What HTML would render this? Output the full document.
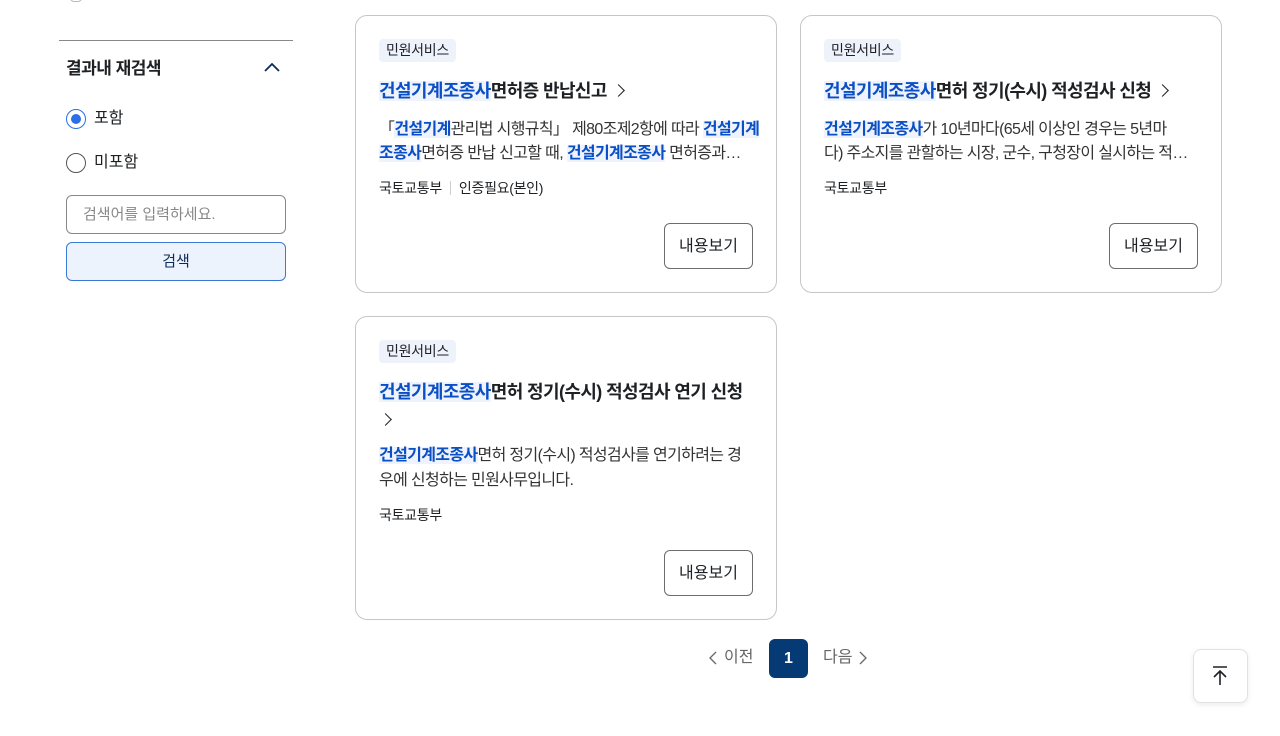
<!DOCTYPE html>
<html lang="ko"><head><meta charset="utf-8"><style>
*{margin:0;padding:0;box-sizing:border-box}
body{width:1280px;height:736px;background:#fff;position:relative;overflow:hidden;font-family:"Liberation Sans","Noto Sans CJK KR",sans-serif;color:#1e2124}
.a{position:absolute}
.card{position:absolute;border:1px solid #c6c6c6;border-radius:12px;background:#fff}
.tag{position:absolute;left:23px;top:23px;height:23px;padding:0 7px;background:#eef2fb;border-radius:4px;font-size:14px;line-height:23px;color:#1e2124;letter-spacing:-0.3px}
.title{position:absolute;left:23px;font-size:18px;font-weight:700;line-height:28px;white-space:nowrap;color:#1e2124;letter-spacing:-0.6px}
.hl{color:#0b4fc5;background:#eef3fd;font-weight:700}
.desc{position:absolute;left:23px;font-size:16px;line-height:24px;color:#333;white-space:nowrap;letter-spacing:-0.65px}
.meta{position:absolute;left:23px;font-size:14px;line-height:20px;color:#1e2124;white-space:nowrap;letter-spacing:-0.3px}
.sep{display:inline-block;width:1px;height:14px;background:#ccc;margin:0 8px;vertical-align:-2px}
.btn{position:absolute;left:308px;width:89px;height:46px;border:1px solid #6d6d6d;border-radius:6px;font-size:16px;line-height:46px;text-align:center;color:#1e2124}
.chev{display:inline-block;width:9px;height:9px;border-top:1.7px solid #1e2124;border-right:1.7px solid #1e2124;transform:rotate(45deg);margin-left:7px;vertical-align:2px}
</style></head><body>

<div class="a" style="left:70px;top:-6px;width:12px;height:8px;border-radius:6px;border:1px solid #bbb"></div>
<div class="a" style="left:59px;top:40px;width:234px;height:1px;background:#888"></div>
<div class="a" style="left:66px;top:57px;font-size:17px;font-weight:700;line-height:24px;color:#1e2124;letter-spacing:-0.5px">결과내 재검색</div>
<svg class="a" style="left:262px;top:60px" width="20" height="14"><path d="M3 11 L10 4 L17 11" fill="none" stroke="#0b2a5c" stroke-width="1.8"/></svg>

<div class="a" style="left:66px;top:109px;width:20px;height:20px;border-radius:50%;border:1.5px solid #2a6fe8"></div>
<div class="a" style="left:71px;top:114px;width:10px;height:10px;border-radius:50%;background:#2a6fe8"></div>
<div class="a" style="left:94px;top:108px;font-size:16px;line-height:22px">포함</div>
<div class="a" style="left:66px;top:153px;width:20px;height:20px;border-radius:50%;border:1.5px solid #555"></div>
<div class="a" style="left:94px;top:152px;font-size:16px;line-height:22px">미포함</div>

<div class="a" style="left:66px;top:195px;width:220px;height:39px;border:1px solid #888;border-radius:6px;font-size:15px;line-height:37px;padding-left:16px;color:#888">검색어를 입력하세요.</div>
<div class="a" style="left:66px;top:242px;width:220px;height:39px;border:1px solid #3a78d8;border-radius:6px;background:#edf3fd;font-size:15px;line-height:37px;text-align:center;color:#0b2a5c">검색</div>

<!-- card 1 -->
<div class="card" style="left:355px;top:15px;width:422px;height:278px">
  <div class="tag">민원서비스</div>
  <div class="title" style="top:61px"><span class="hl">건설기계조종사</span>면허증 반납신고<span class="chev"></span></div>
  <div class="desc" style="top:102px">「<span class="hl">건설기계</span>관리법 시행규칙」 제80조제2항에 따라 <span class="hl">건설기계</span></div>
  <div class="desc" style="top:126px"><span class="hl">조종사</span>면허증 반납 신고할 때, <span class="hl">건설기계조종사</span> 면허증과…</div>
  <div class="meta" style="top:162px">국토교통부<span class="sep"></span>인증필요(본인)</div>
  <div class="btn" style="top:207px">내용보기</div>
</div>

<!-- card 2 -->
<div class="card" style="left:800px;top:15px;width:422px;height:278px">
  <div class="tag">민원서비스</div>
  <div class="title" style="top:61px"><span class="hl">건설기계조종사</span>면허 정기(수시) 적성검사 신청<span class="chev"></span></div>
  <div class="desc" style="top:102px"><span class="hl">건설기계조종사</span>가 10년마다(65세 이상인 경우는 5년마</div>
  <div class="desc" style="top:126px">다) 주소지를 관할하는 시장, 군수, 구청장이 실시하는 적…</div>
  <div class="meta" style="top:162px">국토교통부</div>
  <div class="btn" style="top:207px">내용보기</div>
</div>

<!-- card 3 -->
<div class="card" style="left:355px;top:316px;width:422px;height:304px">
  <div class="tag">민원서비스</div>
  <div class="title" style="top:61px"><span class="hl">건설기계조종사</span>면허 정기(수시) 적성검사 연기 신청</div>
  <div class="title" style="top:89px"><span class="chev" style="margin-left:2px"></span></div>
  <div class="desc" style="top:127px"><span class="hl">건설기계조종사</span>면허 정기(수시) 적성검사를 연기하려는 경</div>
  <div class="desc" style="top:152px">우에 신청하는 민원사무입니다.</div>
  <div class="meta" style="top:188px">국토교통부</div>
  <div class="btn" style="top:233px">내용보기</div>
</div>

<!-- pagination -->
<svg class="a" style="left:707px;top:650px" width="12" height="16"><path d="M9 2 L3 8 L9 14" fill="none" stroke="#666" stroke-width="1.3"/></svg>
<div class="a" style="left:724px;top:647px;font-size:16px;line-height:22px;color:#666">이전</div>
<div class="a" style="left:769px;top:639px;width:39px;height:39px;border-radius:6px;background:#063a74;color:#fff;font-size:16px;font-weight:700;line-height:39px;text-align:center">1</div>
<div class="a" style="left:823px;top:647px;font-size:16px;line-height:22px;color:#666">다음</div>
<svg class="a" style="left:857px;top:650px" width="12" height="16"><path d="M3 2 L9 8 L3 14" fill="none" stroke="#666" stroke-width="1.3"/></svg>

<div class="a" style="left:1193px;top:649px;width:55px;height:54px;border:1px solid #e2e2e2;border-radius:8px;background:#fff;box-shadow:0 2px 6px rgba(0,0,0,0.08)"></div>
<svg class="a" style="left:1210px;top:665px" width="20" height="22"><path d="M3 2 H17 M10 20 V6 M4 12 L10 6 L16 12" fill="none" stroke="#1e2124" stroke-width="1.6"/></svg>

</body></html>
